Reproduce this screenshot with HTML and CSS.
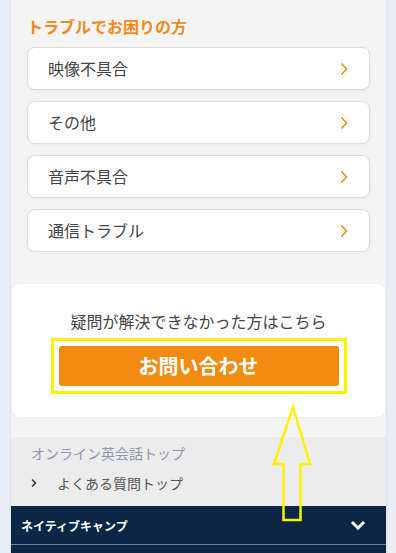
FILE: index.html
```html
<!DOCTYPE html>
<html lang="ja">
<head>
<meta charset="utf-8">
<link rel="stylesheet" href="styles.css">
</head>
<body>
<div class="page">
  <section class="trouble">
    <h2 class="trouble-title">トラブルでお困りの方</h2>
    <ul class="card-list">
      <li class="card"><span>映像不具合</span><svg class="chev" viewBox="0 0 8 14"><path d="M1.5 1.5 L6.5 7 L1.5 12.5"/></svg></li>
      <li class="card"><span>その他</span><svg class="chev" viewBox="0 0 8 14"><path d="M1.5 1.5 L6.5 7 L1.5 12.5"/></svg></li>
      <li class="card"><span>音声不具合</span><svg class="chev" viewBox="0 0 8 14"><path d="M1.5 1.5 L6.5 7 L1.5 12.5"/></svg></li>
      <li class="card"><span>通信トラブル</span><svg class="chev" viewBox="0 0 8 14"><path d="M1.5 1.5 L6.5 7 L1.5 12.5"/></svg></li>
    </ul>
    <div class="contact">
      <p class="contact-lead">疑問が解決できなかった方はこちら</p>
      <div class="highlight">
        <a class="contact-btn">お問い合わせ</a>
      </div>
    </div>
  </section>
  <nav class="breadcrumb">
    <div class="crumb-top">オンライン英会話トップ</div>
    <div class="crumb-sub"><svg class="crumb-arrow" viewBox="0 0 6 10"><path d="M1 1.5 L4.5 5 L1 8.5"/></svg>よくある質問トップ</div>
  </nav>
  <div class="navbar">
    <span class="nav-title">ネイティブキャンプ</span>
    <svg class="nav-chev" viewBox="0 0 16 10"><path d="M2 2 L8 8 L14 2"/></svg>
  </div>
  <div class="navbar-next"></div>
</div>
<svg class="annot-arrow" width="396" height="553" viewBox="0 0 396 553">
  <polygon points="293,407 274,464 283.5,464 283.5,520 300.5,520 300.5,464 310,464"/>
</svg>
</body>
</html>
```
FILE: styles.css
```css
* { box-sizing: border-box; }
html, body { margin: 0; padding: 0; }
body {
  background: #e9edf5;
  font-family: "Noto Sans CJK JP", "Noto Sans", sans-serif;
  height: 553px;
  overflow: hidden;
  position: relative;
}
.page {
  margin-left: 11px;
  width: 375px;
  background: #f4f4f4;
  box-shadow: 0 0 2px rgba(0,0,0,0.12);
  min-height: 553px;
}
.trouble {
  padding: 14px 0 20px;
}
.trouble-title {
  margin: 0 16px;
  font-size: 16px;
  line-height: 24px;
  font-weight: 700;
  color: #f08a1c;
}
.card-list {
  list-style: none;
  margin: 9px 16px 0;
  padding: 0;
  display: flex;
  flex-direction: column;
  gap: 11px;
}
.card {
  height: 43px;
  background: #fff;
  border: 1px solid #dcdcdc;
  border-radius: 8px;
  box-shadow: 0 1px 4px rgba(0,0,0,0.04);
  display: flex;
  align-items: center;
  justify-content: space-between;
  padding: 0 21px 2px 20px;
  font-size: 16px;
  color: #444;
}
.chev {
  width: 8px;
  height: 14px;
  fill: none;
  stroke: #f08a1c;
  stroke-width: 1.6;
  margin-top: 2px;
}
.contact {
  margin: 32px 1px 0;
  background: #fff;
  border-radius: 8px;
  padding: 25px 0 23px;
  display: flex;
  flex-direction: column;
  align-items: center;
  box-shadow: 0 0 2px rgba(0,0,0,0.06);
}
.contact-lead {
  margin: 0 0 5px;
  font-size: 16px;
  line-height: 24px;
  color: #444;
}
.highlight {
  border: 3px solid #fff200;
  padding: 5px;
}
.contact-btn {
  display: flex;
  align-items: center;
  justify-content: center;
  width: 280px;
  height: 40px;
  padding-bottom: 2px;
  background: #f28b0f;
  border-radius: 3px;
  color: #fff;
  font-size: 20px;
  font-weight: 700;
}
.breadcrumb {
  background: #ececec;
  padding: 5px 0 12px 20px;
  font-size: 14px;
}
.crumb-top {
  line-height: 22px;
  color: #8c96aa;
}
.crumb-sub {
  margin-top: 8px;
  line-height: 22px;
  color: #555;
  display: flex;
  align-items: center;
}
.crumb-arrow {
  width: 6px;
  height: 10px;
  margin-right: 20px;
  fill: none;
  stroke: #333;
  stroke-width: 1.5;
}
.navbar {
  height: 38px;
  background: #0b2745;
  display: flex;
  align-items: center;
  justify-content: space-between;
  padding: 0 20px 0 10px;
}
.nav-title {
  color: #fff;
  font-size: 12px;
  font-weight: 700;
}
.nav-chev {
  width: 16px;
  height: 10px;
  fill: none;
  stroke: #fff;
  stroke-width: 3;
}
.navbar-next {
  height: 20px;
  background: #0b2745;
  border-top: 1px solid #6f829a;
}
.annot-arrow {
  position: absolute;
  left: 0;
  top: 0;
  pointer-events: none;
}
.annot-arrow polygon {
  fill: none;
  stroke: #fff200;
  stroke-width: 2.5;
}
```
